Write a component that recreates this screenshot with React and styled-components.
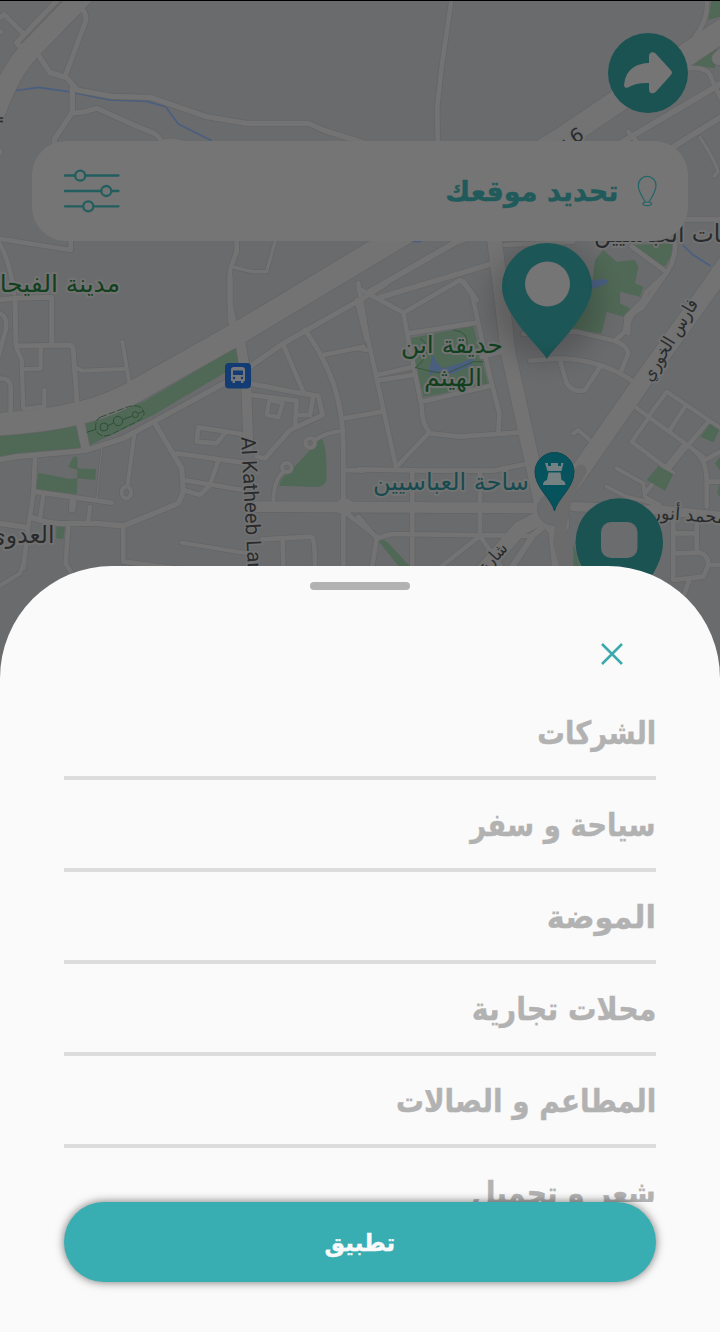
import React from "react";
import styled, { createGlobalStyle } from "styled-components";

const c = {
  block: "#6a6b6d",
  road: "#737373",
  casing: "#636466",
  card: "#757575",
  park: "#506856",
  parkText: "#12401f",
  water: "#4a5f80",
  text: "#292b2d",
  tealDim: "#1b5353",
  teal: "#38adb2",
  sheet: "#fafafa",
};

const GlobalStyle = createGlobalStyle`
  * { box-sizing: border-box; }
  body { margin: 0; background: ${c.block}; }
`;

const Screen = styled.main`
  position: relative;
  width: 720px;
  height: 1332px;
  overflow: hidden;
  display: flex;
  flex-direction: column;
  font-family: "DejaVu Sans", sans-serif;
  border-top: 1px solid #000;
`;

const MapCanvas = styled.svg`
  position: absolute;
  left: 0;
  top: -1px;
  display: block;
`;

const TopArea = styled.div`
  position: relative;
  height: 565px;
  flex: none;
  padding: 32px 32px 0;
  display: flex;
  flex-direction: column;
  align-items: flex-end;
  gap: 28px;
`;

const ShareButton = styled.button`
  width: 80px;
  height: 80px;
  border: 0;
  padding: 0;
  border-radius: 50%;
  background: ${c.tealDim};
  display: grid;
  place-items: center;
`;

const SearchCard = styled.div`
  width: 100%;
  height: 100px;
  border-radius: 34px;
  background: ${c.card};
  display: flex;
  align-items: center;
  justify-content: space-between;
  padding: 0 30px 0 32px;
`;

const LocationField = styled.div`
  display: flex;
  align-items: center;
  gap: 18px;
`;

const Label = styled.span`
  display: inline-block;
  font-weight: 700;
  white-space: nowrap;
  direction: rtl;
  font-size: ${(p) => p.$size}px;
  line-height: 1.2;
  color: ${(p) => p.$color};
  -webkit-text-stroke: 0.4px ${(p) => p.$color};
  transform: translateY(${(p) => p.$dy || 0}px) scaleX(${(p) => p.$stretch || 1});
  transform-origin: ${(p) => p.$origin || "right"} center;
`;

const Sheet = styled.section`
  position: relative;
  flex: 1;
  min-height: 0;
  background: ${c.sheet};
  border-radius: 112px 112px 0 0;
  display: flex;
  flex-direction: column;
  align-items: center;
  padding: 16px 64px 50px;
`;

const Handle = styled.div`
  width: 100px;
  height: 8px;
  flex: none;
  border-radius: 4px;
  background: #b2b2b2;
`;

const SheetHeader = styled.div`
  width: 100%;
  height: 98px;
  flex: none;
  display: flex;
  justify-content: flex-end;
  padding: 52px 32px 0;
`;

const CloseButton = styled.button`
  width: 24px;
  height: 24px;
  padding: 0;
  border: 0;
  background: none;
`;

const List = styled.ul`
  width: 100%;
  flex: 1;
  min-height: 0;
  margin: 0;
  padding: 0;
  overflow: hidden;
  list-style: none;
`;

const Row = styled.li`
  height: 92px;
  display: flex;
  align-items: center;
  justify-content: flex-end;
  border-bottom: 4px solid #dcdcdc;
`;

const ApplyButton = styled.button`
  position: relative;
  width: 100%;
  height: 80px;
  flex: none;
  border: 0;
  border-radius: 40px;
  background: ${c.teal};
  box-shadow: 0 0 10px rgba(0, 0, 0, 0.55);
  display: grid;
  place-items: center;
  font-family: inherit;
`;

/* Map tiles: every tile covers 360px at three units per pixel. */
const tiles = {
  a: "scale(.33333)",
  b: "translate(360 0) scale(.33333)",
  c: "translate(0 280) scale(.33333)",
  d: "translate(360 280) scale(.33333)",
};

const roads = [
  ["a", 62, "M260 -25 L90 150 Q30 215 -12 330"],
  ["a", 16, "M180 -8 L72 105 L50 128 L62 142"],
  ["a", 15, "M-5 55 L13 44 L72 103"],
  ["a", 10, "M-5 88 L5 95 L-5 102"],
  ["a", 15, "M247 28 Q262 45 256 66 L195 230"],
  ["a", 16, "M115 165 L150 218 L200 233 L232 270 L335 289 L450 292 L620 350 L740 370 L925 370 L975 392 L1090 428"],
  ["a", 16, "M217 265 L217 337 L163 418 L163 445"],
  ["a", 15, "M217 339 L250 336 L290 325 L390 370 L462 400 Q480 410 487 430"],
  ["a", 14, "M470 432 Q510 412 560 432"],
  ["a", 30, "M-20 455 L-8 455"],
  ["a", 14, "M-5 716 L212 750 L212 715"],
  ["a", 14, "M-5 725 Q30 780 42 880"],
  ["a", 14, "M710 700 L710 755 L690 810 L690 960 L702 1000"],
  ["a", 10, "M695 800 L755 815 L800 815 L828 715"],
  ["b", 14, "M275 -5 L245 200 L232 320 L233 430"],
  ["b", 14, "M1040 -5 Q1048 55 1005 110 L970 150"],
  ["b", 40, "M1092 160 L1076 175"],
  ["b", 14, "M985 205 Q1048 198 1056 240 L1085 300"],
  ["b", 18, "M780 430 L1085 250"],
  ["b", 18, "M925 450 L1085 350"],
  ["b", 14, "M805 395 L835 430"],
  ["b", 10, "M1020 412 Q1070 490 1074 515 L1062 528"],
  ["b", 15, "M970 658 L1090 658"],
  ["b", 14, "M815 740 L918 815"],
  ["b", 14, "M945 715 Q950 770 925 810 L845 925 Q800 940 805 1000"],
  ["b", 54, "M1100 790 L1062 845 L850 1140 L620 1470 L585 1540"],
  ["b", 18, "M20 880 L290 725 L320 715"],
  ["b", 16, "M60 892 L400 790"],
  ["b", 16, "M310 845 L350 900"],
  ["b", 14, "M435 735 L640 725"],
  ["b", 44, "M403 715 L445 1060 L555 1560"],
  ["c", 68, "M-10 433 Q130 425 235 400 T420 325 L705 165 L1130 -90 L1680 -420 L2170 -750"],
  ["c", 16, "M690 -10 L690 70 L702 130"],
  ["c", 16, "M-5 540 L50 530 L255 512 L370 475 L470 420 L700 295 L850 190 L1080 60 L1160 10"],
  ["c", 26, "M238 415 L257 505"],
  ["c", 30, "M720 180 L738 290 L745 500"],
  ["c", 15, "M-5 60 L45 55 L155 52 L155 190"],
  ["c", 15, "M45 55 L48 198 L205 195 Q222 198 220 215 L232 380"],
  ["c", 14, "M-5 100 Q25 105 17 150 L-5 230"],
  ["c", 13, "M50 205 L65 240 L70 385 M65 268 L122 266 L122 200 M133 330 L133 380 L75 386"],
  ["c", 14, "M-5 296 Q30 292 32 320 L32 400"],
  ["c", 12, "M232 265 L245 272 L380 266 M367 185 L388 310"],
  ["c", 14, "M105 535 L100 640 L85 740 L70 865"],
  ["c", 14, "M103 635 L160 643 L335 668"],
  ["c", 16, "M-5 730 L80 742 M90 710 Q150 735 205 730 L290 730 L370 738 L535 670 L550 635 L545 565 L465 430"],
  ["c", 13, "M130 645 L120 715 M224 655 L220 690 L213 690 L215 655 M270 680 L265 725"],
  ["c", 12, "M403 465 L382 620 A14 18 0 1 0 386 622"],
  ["c", 4, "M305 505 L290 655"],
  ["c", 14, "M205 735 L197 850 L215 880 M370 740 L370 845 L600 875"],
  ["c", 12, "M-5 920 L60 880 L70 850"],
  ["c", 14, "M725 462 L595 442 L590 485 L650 490 L678 455"],
  ["c", 14, "M530 520 L730 548 M655 540 L630 615 L600 645 L550 630 M550 600 L730 630"],
  ["c", 12, "M545 788 L740 820"],
  ["c", 15, "M745 310 L905 340 L955 348 L968 405 L870 450 L795 535 L770 530"],
  ["c", 14, "M850 195 L912 340 M755 345 L890 362 L885 440 M940 345 L930 405 L888 405"],
  ["c", 13, "M808 360 L848 370 L835 412 L800 405 Z"],
  ["c", 15, "M915 150 Q970 225 1000 310 Q1030 400 1030 500 L1030 870"],
  ["c", 14, "M970 225 L1090 200 M1030 415 L1090 405 M1030 570 L1090 572"],
  ["c", 14, "M1070 60 L1100 180"],
  ["c", 12, "M930 475 A14 14 0 1 0 931 475 M945 480 Q980 455 1030 452"],
  ["c", 12, "M860 548 A14 14 0 1 0 861 548 M850 575 Q820 600 820 670"],
  ["c", 32, "M770 680 L1600 684"],
  ["c", 50, "M1032 680 L1036 680"],
  ["c", 14, "M785 778 L935 770 Q945 772 945 870 M848 778 L850 870 M1040 700 L1130 770"],
  ["d", 14, "M-5 10 L20 160 L108 560 M-5 25 L130 98 L300 0 Q335 30 340 60 L390 290 L418 400 L415 460"],
  ["d", 14, "M130 98 L145 180 L185 380 Q185 430 210 460 L300 470 L510 455 M145 160 L350 128"],
  ["d", 14, "M20 45 L105 -10 M-5 205 L18 210 M50 285 L155 262 M50 302 L160 285 M-5 408 L65 395 M185 365 L390 318"],
  ["d", 14, "M205 460 L115 555 M365 230 L455 208"],
  ["d", 14, "M-5 568 L200 572 L400 572 L530 545"],
  ["d", 14, "M157 575 L157 870 M360 575 L360 770 M-5 710 L50 775 L35 870 M50 775 L95 762 L510 768 M360 768 L430 870 M360 768 L230 870"],
  ["d", 44, "M560 705 L480 745 L370 870"],
  ["d", 18, "M545 745 L520 765 L450 870"],
  ["d", 14, "M490 162 L650 155 L765 183 L795 155 L800 110 L850 60 L860 35 L920 -20"],
  ["d", 14, "M510 242 L600 235 Q730 240 820 305 M765 183 Q800 195 805 220 L785 270 M600 240 L620 310 Q640 340 675 330 L720 260"],
  ["d", 12, "M640 460 L655 450 L695 485"],
  ["d", 13, "M825 380 L865 410 L975 490 L1030 530 M865 410 L920 335 L1090 450 M975 380 L930 450 M865 415 L815 485 L940 580 M1045 425 L985 495 L900 600 M975 490 L855 640"],
  ["d", 14, "M1000 510 Q1040 540 1040 600 L1040 680 M1035 540 L1090 510 M1040 605 L1090 605"],
  ["d", 12, "M770 565 L850 610 L855 650 L900 675 M740 620 L800 650 L900 675"],
  ["d", 28, "M640 680 L900 690 L1090 710"],
  ["d", 14, "M940 700 L940 900 L1030 890 L1045 855 L1090 855 M1010 730 L1010 815 M940 760 L1010 760 M945 820 L1020 818 Q1045 825 1045 855 M990 895 L970 950"],
  ["d", 76, "M575 640 L590 730"],
  ["d", 45, "M585 720 L600 880"],
];

const parks = [
  ["c", "M0 465 L60 460 L235 430 L245 505 L0 530Z M255 425 L430 365 L705 205 L720 230 L722 250 L460 405 L265 497Z"],
  ["c", "M115 578 L207 597 L232 595 L232 570 L205 560 L220 530 L232 530 L232 565 L288 568 L286 600 L233 595 L230 643 L108 628Z M170 735 L195 737 L190 777 L168 775Z"],
  ["c", "M963 475 Q980 485 980 590 Q980 620 950 621 L838 617 Q840 592 870 575Z"],
  ["b", "M815 735 L940 730 Q940 770 910 803Z M1055 0 L1080 0 L1080 50 L1045 60Z M990 185 L1070 140 L1065 205 L1010 198Z"],
  ["b", "M705 780 L730 750 L770 785 L825 780 L835 800 L825 850 L850 860 L840 890 L780 875 L780 910 L820 930 L790 950 L740 935 L725 1000 L635 990 L690 900Z"],
  ["d", "M150 175 L340 138 L385 315 L190 350Z M640 790 L660 860 L640 860Z M58 785 Q70 775 85 790 L150 860 L118 860Z"],
];

/* Small courtyards that sit on top of the street grid. */
const courtyards = "M1050 432 L1078 450 L1060 487 L1022 470Z M895 558 L940 582 L915 632 L860 600Z M1080 530 L1065 550 L1080 570Z M58 785 Q70 775 85 790 L150 860 L118 860Z M1078 610 L1080 650 L1072 640Z";

const waters = [
  ["a", 5, "M38 273 L115 262 L205 275 L330 300 L440 304 L497 320 L535 372 L635 422"],
  ["b", 5, "M968 735 L1000 765 L1052 798"],
];

function MapLabel({ x, y, size, width, color = c.text, rotate = 0, direction, children }) {
  return (
    <text
      x={x}
      y={y}
      fontSize={size}
      fill={color}
      textAnchor="middle"
      textLength={width}
      lengthAdjust="spacingAndGlyphs"
      stroke="#727272"
      strokeWidth="4"
      strokeLinejoin="round"
      paintOrder="stroke"
      direction={direction}
      transform={rotate ? `rotate(${rotate} ${x} ${y})` : undefined}
    >
      {children}
    </text>
  );
}

function CityMap() {
  return (
    <MapCanvas width="720" height="700" viewBox="0 0 720 700" fontFamily="DejaVu Sans, sans-serif">
      <defs>
        <filter id="pinShadow" x="-60%" y="-60%" width="220%" height="220%">
          <feGaussianBlur stdDeviation="13" />
        </filter>
        <radialGradient id="pinFill" cx=".5" cy=".4" r=".6">
          <stop offset=".75" stopColor="#1d5656" />
          <stop offset="1" stopColor="#185050" />
        </radialGradient>
      </defs>
      <rect width="720" height="700" fill={c.block} />
      {parks.map(([t, d], i) => (
        <path key={i} transform={tiles[t]} d={d} fill={c.park} />
      ))}
      {waters.map(([t, w, d], i) => (
        <path key={i} transform={tiles[t]} d={d} fill="none" stroke={c.water} strokeWidth={w} />
      ))}
      <g fill="none" strokeLinejoin="round" strokeLinecap="round">
        {roads.map(([t, w, d], i) => (
          <path key={i} transform={tiles[t]} d={d} stroke={c.casing} strokeWidth={w + 4} />
        ))}
        {roads.map(([t, w, d], i) => (
          <path key={i} transform={tiles[t]} d={d} stroke={c.road} strokeWidth={w} />
        ))}
      </g>
      <g transform={tiles.b}>
        <path d="M700 850 L715 838 L740 838 L742 850 L700 868Z" fill={c.water} />
        <path d="M150 720 Q170 735 195 720Z" fill={c.water} />
      </g>
      <g transform={tiles.d}>
        <path d={courtyards} fill={c.park} />
        <path d="M690 0 L745 0 L695 24Z" fill={c.water} />
        <path d="M205 285 L218 222 Q230 255 250 265 L300 250 L340 235 L335 255 L270 285 L245 272Z" fill={c.water} />
        <path d="M180 175 Q230 210 165 265 M280 150 Q330 155 320 200 M165 262 Q230 280 260 280 L340 245 L370 245" stroke="#35553d" strokeWidth="3" fill="none" />
        <circle cx="580" cy="688" r="48" fill={c.block} stroke={c.casing} strokeWidth="2" />
        <path d="M662 572 Q612 650 603 730 L597 790 L618 870" fill="none" stroke="#6b6b6b" strokeWidth="36" strokeLinecap="round" />
      </g>
      <g transform={tiles.c} fill="none" stroke="#2d5035" strokeWidth="3">
        <path d="M300 412 L385 380 Q425 370 432 398 Q434 412 410 425 L330 465 Q295 475 287 447 Q285 420 300 412Z" strokeDasharray="22 5" />
        <circle cx="312" cy="441" r="12" />
        <circle cx="354" cy="423" r="14" />
        <circle cx="406" cy="404" r="9" />
        <path d="M260 457 L288 448 M324 437 L340 429 M368 419 L396 408 M415 400 L430 394" />
      </g>

      <g transform="translate(225 363)">
        <rect width="26" height="25.500" rx="4" fill="#123c73" />
        <path d="M6 6.500 Q6 4 9 4 H17 Q20 4 20 6.500 V18 H18.500 V20 H16 V18 H10 V20 H7.500 V18 H6Z" fill="#75777a" />
        <path d="M8 7.500 H18 V12 H8Z" fill="#123c73" />
        <circle cx="9" cy="15" r="1.200" fill="#123c73" />
        <circle cx="17" cy="15" r="1.200" fill="#123c73" />
      </g>

      <MapLabel x={54} y={292} size={24} width={132} color={c.parkText}>مدينة الفيحاء</MapLabel>
      <MapLabel x={452} y={353} size={24} width={102} color={c.parkText}>حديقة ابن</MapLabel>
      <MapLabel x={453} y={386} size={24} width={58} color={c.parkText}>الهيثم</MapLabel>
      <MapLabel x={451} y={490} size={24} width={156} color="#174b50">ساحة العباسيين</MapLabel>
      <MapLabel x={678} y={242} size={25} width={168}>ساحات العباسيين</MapLabel>
      <MapLabel x={21} y={543} size={24} width={67}>العدوي</MapLabel>
      <MapLabel x={675} y={343} size={18} width={92} rotate={-59}>فارس الخوري</MapLabel>
      <MapLabel x={689} y={521} size={18} width={74} rotate={4}>محمد أنور</MapLabel>
      <MapLabel x={490} y={569} size={17} width={54} rotate={-47}>شارع ال</MapLabel>
      <MapLabel x={554} y={156} size={19} width={72} rotate={-30} direction="rtl">6 تشرين</MapLabel>
      <text transform="translate(241 437) rotate(87)" fontFamily="Roboto, sans-serif" fontSize="20.500" textLength="148" lengthAdjust="spacingAndGlyphs" fill={c.text} stroke="#727272" strokeWidth="3" paintOrder="stroke">Al Katheeb Lane</text>
      <path d="M0 118 h3 M0 121.500 h3" stroke={c.text} strokeWidth="1.500" />

      <ellipse cx="545" cy="303" rx="54" ry="58" fill="#000" opacity=".18" filter="url(#pinShadow)" />
      <path d="M547 359 C543 350 502 315 502 287 A45 44 0 0 1 592 287 C592 315 551 350 547 359Z" fill="url(#pinFill)" />
      <circle cx="547.500" cy="284" r="22.500" fill="#757575" />

      <path d="M554.500 511 C552 499 535 488 535 472 A19.500 19.500 0 0 1 574 472 C574 488 557 499 554.500 511Z" fill="#06535e" stroke="#094850" />
      <path d="M545 463 H548 V466 H551 V463 H558 V466 H561 V463 H563.500 L561.500 471 H547.500Z M548.500 472.500 H560.500 L561.500 480 Q565.500 481 565.500 485 H543 Q543 481 547 480Z" fill="#758083" />

      <path d="M619 619 C613 603 575.500 577 575.500 542 A43.700 43.700 0 0 1 663 542 C663 577 625 603 619 619Z" fill={c.tealDim} />
      <rect x="601" y="522" width="36.500" height="36" rx="10" fill="#6b6c6e" />
    </MapCanvas>
  );
}

function ShareIcon() {
  return (
    <svg width="80" height="80" viewBox="744 99 240 240">
      <path d="M867 168 Q868 157 878 157 Q884 157 888 162 L932 210 Q940 218 932 226 L889 274 Q884 280 878 280 Q868 280 867 269 L867 249 Q830 247 805 262 Q793 267 792 256 Q794 218 822 201 Q840 190 867 189Z" fill="#757575" />
    </svg>
  );
}

function FilterIcon() {
  return (
    <svg width="56" height="44" viewBox="64 169 56 44" fill="none" stroke="#235e5f" strokeWidth="2.300" strokeLinecap="round">
      <path d="M65 175.500H74.500M86 175.500H118.500M65 191H100.500M112 191H118.500M65 206.300H82.500M94 206.300H118.500" />
      <circle cx="80.200" cy="175.700" r="5" />
      <circle cx="106.300" cy="191" r="5" />
      <circle cx="88.300" cy="206.300" r="5" />
    </svg>
  );
}

function BulbIcon() {
  return (
    <svg width="22" height="32" viewBox="827 525 66 96" fill="none" stroke="#206568" strokeWidth="3.500">
      <path d="M855 606 C848 592 834 577 834 556 A26.500 27 0 0 1 887 556 C887 577 873 592 866 606" />
      <ellipse cx="860.500" cy="611.500" rx="13" ry="5.500" />
    </svg>
  );
}

const categories = [
  { name: "الشركات", stretch: 0.86 },
  { name: "سياحة و سفر", stretch: 0.86 },
  { name: "الموضة", stretch: 0.95 },
  { name: "محلات تجارية", stretch: 0.89 },
  { name: "المطاعم و الصالات", stretch: 0.87 },
  { name: "شعر و تجميل", stretch: 0.88 },
];

export default function App() {
  return (
    <Screen>
      <GlobalStyle />
      <CityMap />
      <TopArea>
        <ShareButton aria-label="مشاركة">
          <ShareIcon />
        </ShareButton>
        <SearchCard>
          <FilterIcon />
          <LocationField>
            <Label $size={28} $color="#205a5b" $stretch={0.97} $dy={1}>تحديد موقعك</Label>
            <BulbIcon />
          </LocationField>
        </SearchCard>
      </TopArea>
      <Sheet>
        <Handle />
        <SheetHeader>
          <CloseButton aria-label="إغلاق">
            <svg width="24" height="24" viewBox="0 0 24 24" stroke="#3ba9ad" strokeWidth="2.500">
              <path d="M2 2 L22 22 M22 2 L2 22" />
            </svg>
          </CloseButton>
        </SheetHeader>
        <List>
          {categories.map((item) => (
            <Row key={item.name}>
              <Label $size={32} $color="#b2b2b2" $stretch={item.stretch} $dy={1}>{item.name}</Label>
            </Row>
          ))}
        </List>
        <ApplyButton>
          <Label $size={24} $color="#fafafa" $origin="center" $stretch={0.96} $dy={1}>تطبيق</Label>
        </ApplyButton>
      </Sheet>
    </Screen>
  );
}
